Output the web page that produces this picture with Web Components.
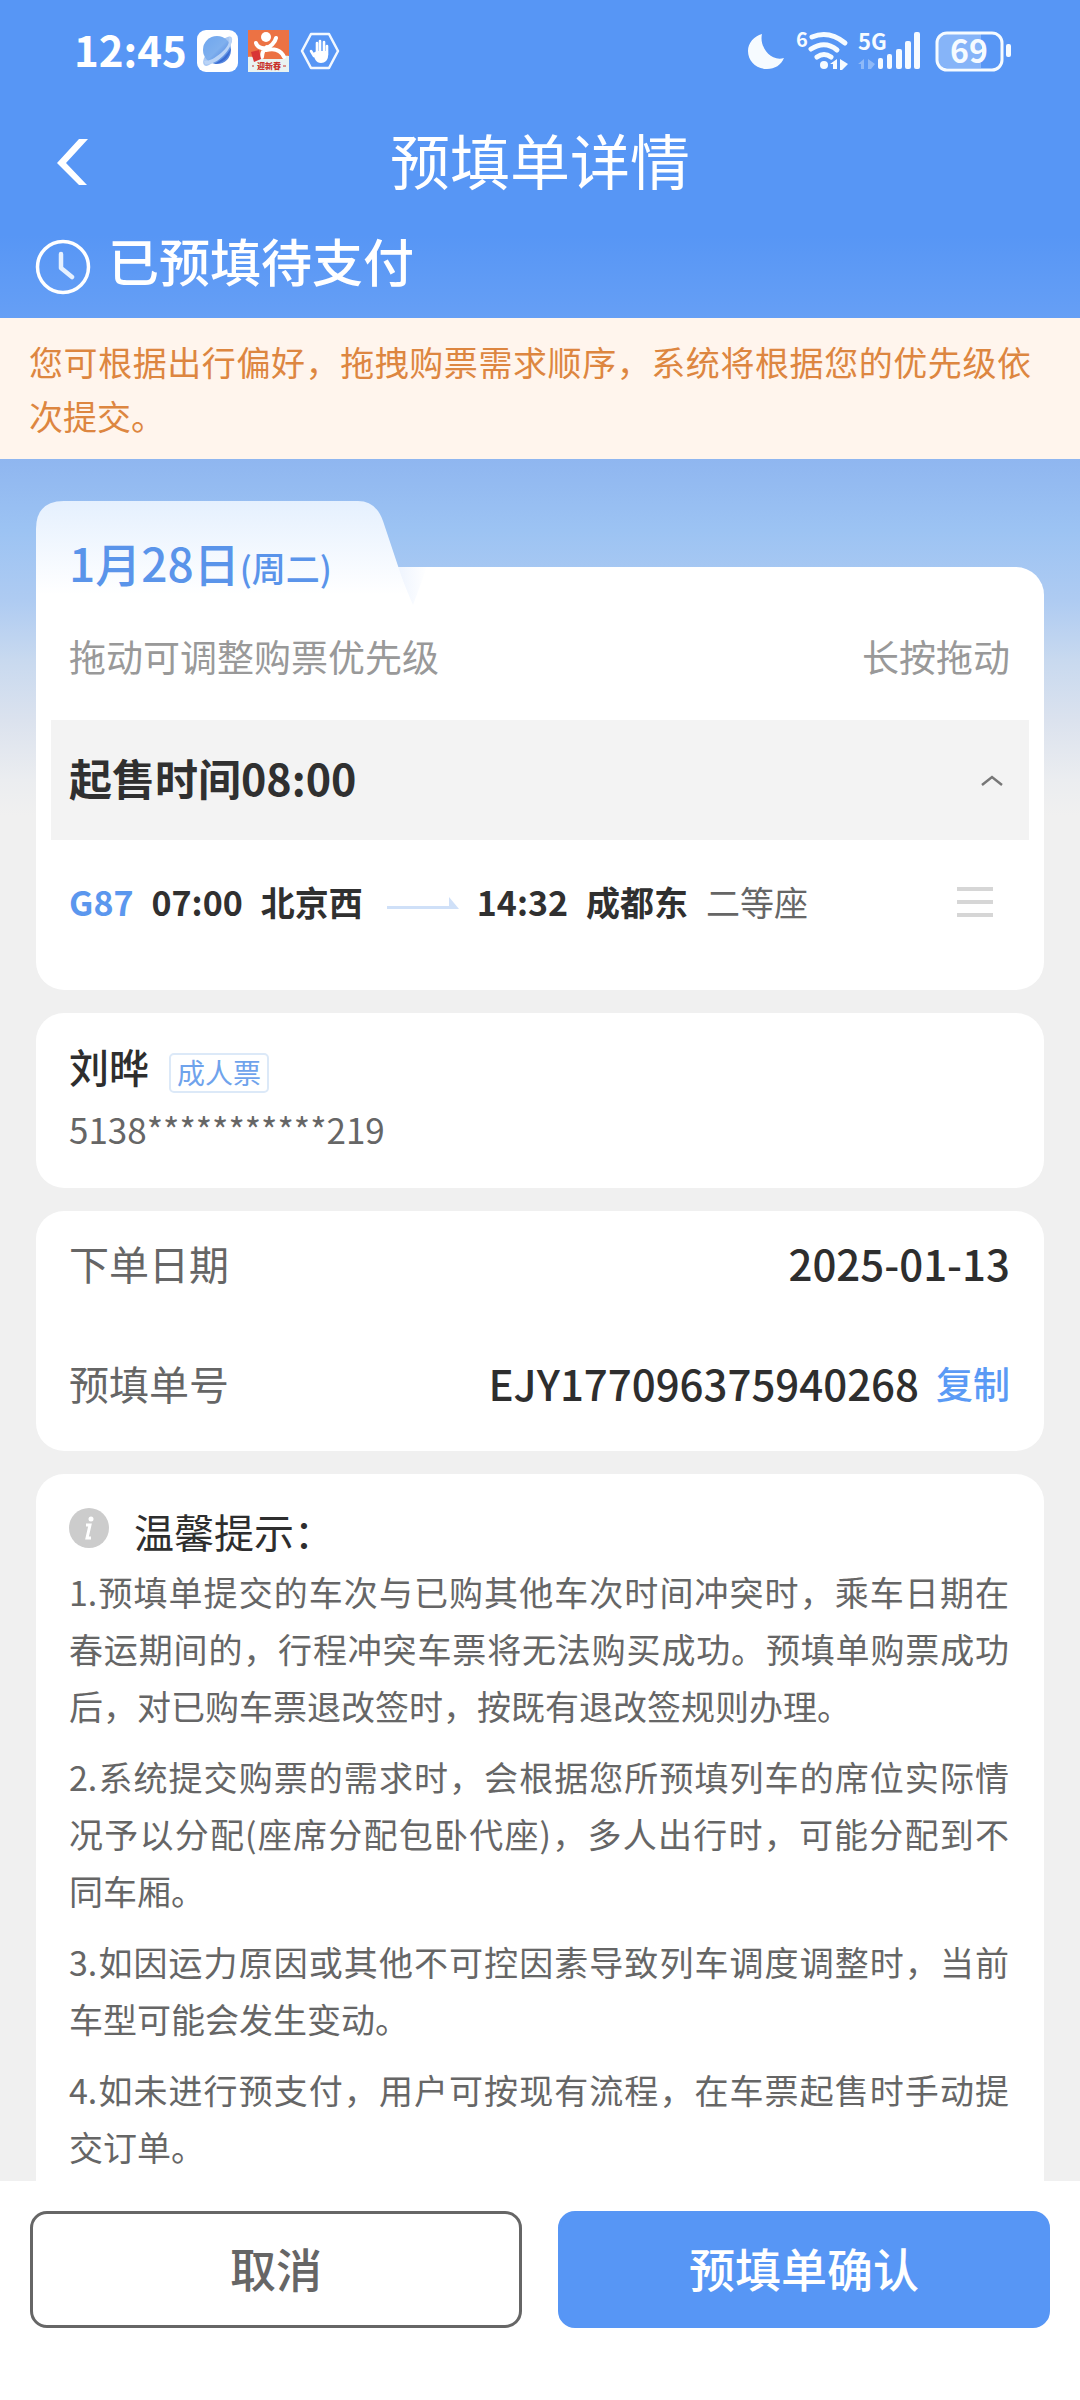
<!DOCTYPE html>
<html lang="zh-CN">
<head>
<meta charset="utf-8">
<meta name="viewport" content="width=device-width, initial-scale=1">
<title>预填单详情</title>
<style>
  html, body { margin: 0; }
  body {
    font-family: "Noto Sans CJK SC", "Noto Sans", sans-serif;
    --blue: #5796f5;
    --ink: #2e2e2e;
    --mid: #666;
    --soft: #999;
    color: var(--ink);
  }
</style>
</head>
<body>
<order-page>
  <status-bar slot="top" time="12:45"></status-bar>
  <title-bar slot="top">预填单详情</title-bar>
  <order-state slot="top">已预填待支付</order-state>
  <notice-strip slot="top">您可根据出行偏好，拖拽购票需求顺序，系统将根据您的优先级依次提交。</notice-strip>

  <trip-card>
    <span slot="date">1月28日</span><span slot="week">(周二)</span>
    <span slot="hint">拖动可调整购票优先级</span><span slot="action">长按拖动</span>
    <span slot="sale">起售时间08:00</span>
    <train-row>
      <span slot="no">G87</span>
      <span slot="from">07:00</span><span slot="from">北京西</span>
      <span slot="to">14:32</span><span slot="to">成都东</span>
      <span slot="seat">二等座</span>
    </train-row>
  </trip-card>

  <passenger-card>
    <span slot="name">刘晔</span><span slot="kind">成人票</span><span slot="id">5138***********219</span>
  </passenger-card>

  <info-card>
    <info-row><span slot="label">下单日期</span>2025-01-13</info-row>
    <info-row copy><span slot="label">预填单号</span>EJY177096375940268</info-row>
  </info-card>

  <tips-card>
    <span slot="title">温馨提示：</span>
    <p>1.预填单提交的车次与已购其他车次时间冲突时，乘车日期在春运期间的，行程冲突车票将无法购买成功。预填单购票成功后，对已购车票退改签时，按既有退改签规则办理。</p>
    <p>2.系统提交购票的需求时，会根据您所预填列车的席位实际情况予以分配(座席分配包卧代座)，多人出行时，可能分配到不同车厢。</p>
    <p>3.如因运力原因或其他不可控因素导致列车调度调整时，当前车型可能会发生变动。</p>
    <p>4.如未进行预支付，用户可按现有流程，在车票起售时手动提交订单。</p>
  </tips-card>

  <action-bar slot="bottom"></action-bar>
</order-page>

<script>
const define = (name, html) => {
  const tpl = document.createElement('template');
  tpl.innerHTML = '<style>:host,*{box-sizing:border-box}svg{display:block;flex:none}button{font:inherit;margin:0;padding:0;border:0;background:none;cursor:pointer}</style>' + html;
  customElements.define(name, class extends HTMLElement {
    constructor() {
      super();
      this.attachShadow({ mode: 'open' }).append(tpl.content.cloneNode(true));
    }
    connectedCallback() {
      const t = this.shadowRoot.querySelector('time');
      if (t) t.textContent = this.getAttribute('time');
    }
  });
};

define('order-page', `
<style>
  :host { display: flex; flex-direction: column; min-height: 100vh;
    background: linear-gradient(#5796f5 235px, #669ff5 318px, #8fb6f0 459px, #9cc3f3 530px, #aecbf2 600px, #c8d9ef 660px, #dbe2ee 720px, #ebedf0 780px, #f0f0f0 815px); }
  main { flex: 1; display: flex; flex-direction: column; gap: 23px; padding: 42px 36px 0; }
  footer { position: sticky; bottom: 0; z-index: 2; }
</style>
<header><slot name="top"></slot></header>
<main><slot></slot></main>
<footer><slot name="bottom"></slot></footer>`);

define('status-bar', `
<style>
  :host { display: flex; justify-content: space-between; height: 102px; padding: 0 68px 0 74px; color: #fff; }
  div { display: flex; align-items: center; height: 102px; }
  .l { gap: 10px; }
  time { font-size: 42px; font-weight: 700; line-height: 98px; height: 102px; }
  text { font-family: "Noto Sans CJK SC", sans-serif; font-weight: 700; fill: #f6fbff; }
</style>
<div class="l">
  <time></time>
  <svg width="41" height="42" viewBox="0 0 41 42">
    <defs><linearGradient id="p" x1="0" y1="0" x2="1" y2="1"><stop offset="0" stop-color="#6fa6ee"/><stop offset=".5" stop-color="#7fb0ee"/><stop offset="1" stop-color="#3d6fd6"/></linearGradient></defs>
    <rect width="41" height="42" rx="9" fill="#fff"/>
    <path d="M7 35C4 31 9 22 18 15S33 4 35 8c1 4-3 12-12 19S10 38 7 35z" fill="#a9c8f3"/>
    <circle cx="20" cy="20" r="14" fill="url(#p)"/>
    <path d="M8 34c5 1 12-2 18-8s9-12 9-18l-3-1c1 6-2 11-8 16s-11 8-17 8z" fill="#b9d3f6"/>
    <path d="M17 34c7 0 16-6 17-16-4 7-9 12-17 16z" fill="#3a6bd0"/>
  </svg>
  <svg width="41" height="42" viewBox="0 0 41 42">
    <path fill="#ec7244" d="M0 0h41v42H0z"/>
    <path fill="#e9f3f1" d="M0 27c5-1 8 2 14 2s18-4 27-3v16H0z"/>
    <path d="M15 29c2-7 18-8 21 0z" fill="#ec7244"/>
    <circle cx="18" cy="7" r="5" fill="#fff"/>
    <path d="M8 13c1 4 6 6 10 5s9-5 10-10M14 27c0-5 2-8 5-10M18 20c8-2 15 0 18 7" fill="none" stroke="#fff" stroke-width="4" stroke-linecap="round"/>
    <path d="M3 22l8-2 2 9-7 3z" fill="#d83636"/>
    <text x="9" y="39" style="font-size:8px;font-weight:900;fill:#c8342c">迎新春</text>
    <path d="M4 36h2M35 36h3" stroke="#c8342c"/>
  </svg>
  <svg width="42" height="42" viewBox="0 0 42 42">
    <path d="M12 4h18l9 17-9 17H12L3 21z" fill="none" stroke="#f2f8ff" stroke-width="2.500" stroke-linejoin="round"/>
    <path d="M15 26l-3-5M18 24V13M21 24V11M25 24V12M28 25V16" stroke="#fff" stroke-width="2.600" stroke-linecap="round"/>
    <path d="M14 23l4-2h11v5c0 4-3 7-7 7-5 0-7-5-8-10z" fill="#fff"/>
  </svg>
</div>
<div>
  <svg width="266" height="102" viewBox="744 0 266 102" fill="#f6fbff">
    <path d="M760 34c-3 12 8 28 22 24-3 7-9 11-17 11-11 0-19-8-19-18 0-8 6-15 14-17z"/>
    <text x="794" y="47" style="font-size:20px">6</text>
    <g fill="none" stroke="#f6fbff" stroke-width="5" stroke-linecap="round"><path d="M810 37q17-7 33 6M809 49q14-9 26 1M815 57q7-5 14 0"/></g>
    <circle cx="822" cy="65" r="4"/>
    <path d="M828 64l7-5v10h-4v-5zM838 59l8 5-6 6h-2z"/>
    <text x="856" y="50" style="font-size:22px">5G</text>
    <g opacity=".35"><path d="M856 64l6-5v10h-3v-5zM866 59l7 5-4 5h-3z"/></g>
    <rect x="876" y="58" width="5" height="11" rx="2"/><rect x="885" y="54" width="5" height="15" rx="2"/><rect x="894" y="49" width="6" height="20" rx="2"/><rect x="903" y="41" width="6" height="28" rx="2"/><rect x="912" y="32" width="6" height="37" rx="2"/>
    <path d="M945 34h34v34h-34q-9 0-9-9V43q0-9 9-9z" opacity=".3"/>
    <rect x="935" y="33" width="65" height="37" rx="10" fill="none" stroke="#f6fbff" stroke-width="3"/>
    <rect x="1004" y="44" width="5" height="13" rx="2"/>
    <text x="967" y="63" text-anchor="middle" style="font-size:32px">69</text>
  </svg>
</div>`);

define('title-bar', `
<style>
  :host { display: grid; grid-template-columns: 100px 1fr 100px; align-items: center; height: 120px; color: #fff; }
  button { display: flex; justify-content: flex-end; padding-right: 11px; color: #fff; }
  h1 { margin: 0; text-align: center; font-size: 60px; font-weight: 400; line-height: 114px; height: 120px; }
</style>
<button aria-label="返回"><svg width="34" height="48" viewBox="0 0 34 48"><path d="M24 1h9L11 25l21 22h-8L2 25z" fill="#fff"/></svg></button>
<h1><slot></slot></h1>`);

define('order-state', `
<style>
  :host { display: flex; gap: 17px; height: 96px; padding-left: 35px; color: #fff; font-size: 51px; font-weight: 500; line-height: 76px; }
  svg { margin-top: 17px; }
</style>
<svg width="56" height="56" viewBox="0 0 56 56" fill="none" stroke="#fff"><circle cx="28" cy="28" r="25.500" stroke-width="3.500"/><path d="M26 15v14l11 9" stroke-width="4.500" stroke-linecap="round" stroke-linejoin="round" stroke="#e6f1ff"/></svg>
<slot></slot>`);

define('notice-strip', `
<style>
  :host { display: block; padding: 17px 49px 16px 29px; background: #fff5ed; color: #dd8640; font-size: 34px; line-height: 54px; text-align: justify; }
</style><slot></slot>`);

define('trip-card', `
<style>
  :host { display: block; position: relative; z-index: 0; height: 489px; }
  :host::before { content: ""; position: absolute; inset: 66px 0 0; z-index: -1; background: #fff; border-radius: 0 28px 28px 28px; }
  .shape { position: absolute; left: 0; top: 0; z-index: -1; }
  .date { padding-left: 33px; color: #5a94ea; font-weight: 500; font-size: 46px; line-height: 122px; height: 124px; }
  .week { font-size: 34px; }
  .hint { display: flex; justify-content: space-between; padding: 0 34px 0 33px; color: var(--soft); font-size: 37px; line-height: 62px; height: 95px; }
  .sale { display: flex; justify-content: space-between; align-items: center; margin: 0 15px; padding: 0 26px 0 18px; height: 120px; background: #f3f3f3; color: #303030; font-size: 43px; font-weight: 700; line-height: 114px; }
  .sale span { height: 120px; }
</style>
<svg class="shape" width="400" height="110" viewBox="0 0 400 110">
  <defs><linearGradient id="t" x1="0" y1="0" x2="0" y2="1"><stop offset="0" stop-color="#e5f0fe"/><stop offset=".85" stop-color="#fff"/></linearGradient>
  <linearGradient id="s" x1="0" y1="0" x2="1" y2="0"><stop offset="0" stop-color="#eef4fe"/><stop offset="1" stop-color="#fff"/></linearGradient></defs>
  <path d="M361 66h30l-14 38z" fill="url(#s)"/>
  <path d="M0 110V28Q0 0 28 0H322Q340 0 347 20L377 110z" fill="url(#t)"/>
</svg>
<div class="date"><slot name="date"></slot><span class="week"><slot name="week"></slot></span></div>
<div class="hint"><slot name="hint"></slot><slot name="action"></slot></div>
<div class="sale"><span><slot name="sale"></slot></span><button aria-label="收起"><svg width="22" height="12" viewBox="0 0 22 12"><path d="M1 11L11 3l10 8" fill="none" stroke="#777" stroke-width="2.500"/></svg></button></div>
<slot></slot>`);

define('train-row', `
<style>
  :host { display: flex; align-items: center; gap: 18px; padding: 0 51px 0 33px; height: 124px; color: #303030; font-size: 34px; font-weight: 700; line-height: 50px; }
  .no { color: #5b97ee; }
  .seat { color: var(--mid); font-weight: 400; }
  .arrow { margin: 4px 0 0 6px; }
  button { margin-left: auto; }
</style>
<span class="no"><slot name="no"></slot></span>
<slot name="from"></slot>
<svg class="arrow" width="72" height="14" viewBox="0 0 72 14"><path d="M0 9h62V0l10 12H0z" fill="#cfe0f8"/></svg>
<slot name="to"></slot>
<span class="seat"><slot name="seat"></slot></span>
<button aria-label="拖动排序"><svg width="36" height="30" viewBox="0 0 36 30"><path d="M0 2h36M0 15h36M0 28h36" stroke="#d6d6d6" stroke-width="4"/></svg></button>`);

define('passenger-card', `
<style>
  :host { display: block; height: 175px; padding: 21px 33px 0; background: #fff; border-radius: 28px; }
  .row { display: flex; align-items: center; gap: 20px; height: 64px; }
  .name { font-size: 40px; font-weight: 500; line-height: 64px; }
  .kind { margin-top: 14px; padding: 0 6px; border: 2px solid #dce9f8; border-radius: 5px; color: #6fa3ec; font-size: 28px; line-height: 34px; height: 40px; }
  .id { color: var(--mid); font-size: 35px; line-height: 62px; }
</style>
<div class="row"><span class="name"><slot name="name"></slot></span><span class="kind"><slot name="kind"></slot></span></div>
<div class="id"><slot name="id"></slot></div>`);

define('info-card', `
<style>
  :host { display: flex; flex-direction: column; gap: 60px; height: 240px; padding: 22px 34px 0 33px; background: #fff; border-radius: 28px; }
</style><slot></slot>`);

define('info-row', `
<style>
  :host { display: flex; align-items: center; height: 60px; line-height: 60px; font-size: 42px; font-weight: 500; }
  .label { margin-right: auto; color: var(--mid); font-size: 40px; font-weight: 400; }
  button { display: none; margin-left: 17px; color: #5a9af5; font-size: 37px; }
  :host([copy]) button { display: block; }
</style>
<span class="label"><slot name="label"></slot></span><slot></slot><button>复制</button>`);

define('tips-card', `
<style>
  :host { display: flex; flex-direction: column; flex: 1; gap: 14px; padding: 31px 35px 0 33px; background: #fff; border-radius: 28px 28px 0 0; color: var(--mid); font-size: 34px; line-height: 57px; }
  .head { display: flex; gap: 25px; height: 44px; color: var(--ink); font-size: 40px; line-height: 52px; }
  svg { margin-top: 3px; }
  ::slotted(p) { margin: 0; text-align: justify; }
</style>
<div class="head"><svg width="40" height="40" viewBox="0 0 40 40"><circle cx="20" cy="20" r="20" fill="#ccc"/><circle cx="22" cy="11" r="2.500" fill="#fff"/><path d="M17 17h4l-3 13h4" fill="none" stroke="#fff" stroke-width="3"/></svg><slot name="title"></slot></div>
<slot></slot>`);

define('action-bar', `
<style>
  :host { display: flex; gap: 36px; height: 219px; padding: 30px 30px 0; background: #fff; }
  button { flex: 1; height: 117px; padding-bottom: 6px; border-radius: 17px; border: 3px solid var(--mid); color: var(--mid); font-size: 46px; font-weight: 500; }
  .ok { border-color: var(--blue); background: var(--blue); color: #fff; }
</style>
<button>取消</button><button class="ok">预填单确认</button>`);
</script>
</body>
</html>
